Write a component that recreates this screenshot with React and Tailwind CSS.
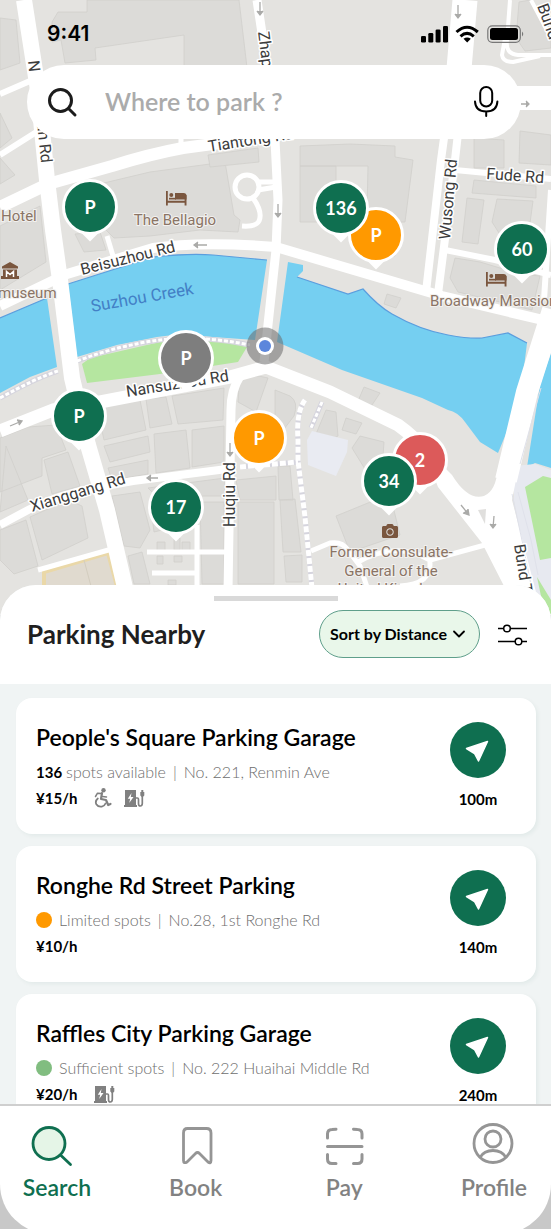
import React from 'react';
import { FaCamera } from 'react-icons/fa';
import { ChevronDown } from 'lucide-react';

const pins = [
  { id: 'bellagio', x: 90, y: 207, label: 'P', color: 'bg-[#0f6f50]' },
  { id: 'tiantong-street', x: 376, y: 235, label: 'P', color: 'bg-[#ff9900]' },
  { id: 'tiantong', x: 341, y: 208, label: '136', color: 'bg-[#0f6f50]' },
  { id: 'broadway', x: 522, y: 249, label: '60', color: 'bg-[#0f6f50]' },
  { id: 'riverside', x: 186, y: 358, label: 'P', color: 'bg-[#7e7e7e]' },
  { id: 'nansuzhou', x: 79, y: 416, label: 'P', color: 'bg-[#0f6f50]' },
  { id: 'huqiu', x: 259, y: 438, label: 'P', color: 'bg-[#ff9900]' },
  { id: 'xianggang', x: 176, y: 507, label: '17', color: 'bg-[#0f6f50]' },
  { id: 'consulate-east', x: 420, y: 460, label: '2', color: 'bg-[#dc5a5a]' },
  { id: 'consulate', x: 389, y: 481, label: '34', color: 'bg-[#0f6f50]' },
];

const WheelchairIcon = () => (
  <svg viewBox="0 0 18 20" className="w-[18px] h-5" fill="none" stroke="currentColor" strokeWidth="1.800" strokeLinecap="round" strokeLinejoin="round" aria-label="Wheelchair access">
    <circle cx="9.500" cy="2.300" r="2.200" fill="currentColor" stroke="none" />
    <path d="M8 5L7 11L12 12L14.200 17L16.500 16" strokeWidth="2.200" />
    <path d="M8 5.500L3.500 5.200L1.500 8.500M8.500 8.500L12.500 9" strokeWidth="1.500" />
    <path d="M3.800 10.500Q0.800 13 2.300 16.200Q4.200 19.200 7.800 18.600Q10.500 18 11.500 15.500" />
  </svg>
);

const ChargerIcon = () => (
  <svg viewBox="0 0 21 18" className="w-[21px] h-[18px]" fill="none" stroke="currentColor" aria-label="EV charging">
    <path d="M1 1H12V16H13V18H0V16H1Z" fill="currentColor" stroke="none" />
    <path d="M7.500 4L3.800 9.800H6.200L5.200 14L9.500 8H6.800Z" fill="#fff" stroke="none" />
    <path d="M12 9H13.500Q14.500 9 14.500 11V14.500Q14.500 17 16.300 17T18.300 14.500V7" strokeWidth="1.700" />
    <path d="M17.300 1H19.300V3H20.300V6.500L18.300 8.500L16.300 6.500V3H17.300Z" fill="currentColor" stroke="none" />
  </svg>
);

const places = [
  {
    name: "People's Square Parking Garage",
    spots: '136',
    status: 'spots available',
    address: 'No. 221, Renmin Ave',
    price: '¥15/h',
    distance: '100m',
    features: [WheelchairIcon, ChargerIcon],
  },
  {
    name: 'Ronghe Rd Street Parking',
    dot: 'bg-[#ff9900]',
    status: 'Limited spots',
    address: 'No.28, 1st Ronghe Rd',
    price: '¥10/h',
    distance: '140m',
    features: [],
  },
  {
    name: 'Raffles City Parking Garage',
    dot: 'bg-[#81bd80]',
    status: 'Sufficient spots',
    address: 'No. 222 Huaihai Middle Rd',
    price: '¥20/h',
    distance: '240m',
    features: [ChargerIcon],
  },
];

const SearchTabIcon = () => (
  <svg viewBox="0 0 56 44" className="w-14 h-11" fill="none" stroke="currentColor" strokeWidth="2.800" strokeLinecap="round">
    <circle cx="20" cy="20.500" r="16" fill="#e5f5e7" />
    <path d="M32 32.500L41.500 41.500" />
  </svg>
);

const BookTabIcon = () => (
  <svg viewBox="0 0 56 44" className="w-14 h-11" fill="none" stroke="#959595" strokeWidth="2.800" strokeLinejoin="round">
    <path d="M19.500 5.500H38.500Q43 5.500 43 10V37.500Q43 41 40 39L31.500 30.500Q29.500 28.500 27.500 30.500L19 39Q15.500 41 15.500 37.500V10Q15.500 5.500 19.500 5.500Z" />
  </svg>
);

const PayTabIcon = () => (
  <svg viewBox="0 0 56 44" className="w-14 h-11" fill="none" stroke="#959595" strokeWidth="3" strokeLinecap="round">
    <path d="M11.500 15V11Q11.500 6.500 16 6.500L20 6.200M37.500 6.200L41.500 6.500Q46 6.500 46 11V15M46 31.500V36Q46 40.500 41.500 40.500H37.500M20 40.500H16Q11.500 40.500 11.500 36V31.500M11.500 23.500H46" />
  </svg>
);

const ProfileTabIcon = () => (
  <svg viewBox="0 0 56 44" className="w-14 h-11" fill="none" stroke="#959595" strokeWidth="2.800">
    <circle cx="27" cy="20.500" r="19" />
    <circle cx="27" cy="16" r="8" />
    <path d="M14 34.500Q18 27.500 27 27.500T40 34.500" />
  </svg>
);

const tabs = [
  { label: 'Search', icon: SearchTabIcon, active: true },
  { label: 'Book', icon: BookTabIcon },
  { label: 'Pay', icon: PayTabIcon },
  { label: 'Profile', icon: ProfileTabIcon },
];

const HotelMark = ({ x, y }) => (
  <svg x={x} y={y} width="21" height="15" viewBox="0 0 21 15" fill="#7a563e">
    <path d="M0 0H1.800V9.800H18.600V4H20.500V14.500H18.600V11.800H1.800V14.500H0Z" />
    <path d="M9 2H17.500Q20.500 2 20.500 5V8.500H9Z" />
    <rect x="3" y="6.800" width="7" height="1.700" />
    <circle cx="5.300" cy="4" r="2" />
  </svg>
);

const MuseumMark = () => (
  <svg x="1" y="262" width="18" height="17" viewBox="0 0 18 17" fill="#7a563e">
    <path d="M9 0L17 4.500V6.500H1V4.500ZM2 7.500H16V14H18V17H0V14H2Z" />
    <path d="M5.500 15V9.500L9 12.500L12.500 9.500V15" fill="none" stroke="#fff" strokeWidth="1.500" />
  </svg>
);

const MapDrawing = () => (
  <svg viewBox="0 0 551 615" className="absolute inset-0 w-full h-full" aria-hidden="true">
    <rect width="551" height="615" fill="#e4e3e0" />

    {/* Buildings */}
    <g fill="#dcdbd8" stroke="#d1cfcc" strokeWidth="0.8">
      <path d="M0 18L16 20L20 63L0 70Z" />
      <path d="M87 0H239L248 76L184 66V35L95 48L96 60L65 63L61 40L52 42V22L58 12H87Z" />
      <path d="M0 113L12 138L0 148ZM0 158L15 175L0 184ZM0 226L40 206L46 262L0 290Z" />
      <path d="M68 192L108 182L150 172L225 162L234 215L240 220L238 232L200 230L150 236L114 238Z" />
      <path d="M75 234L100 232L106 250L84 252ZM208 155L258 148L259 162L210 167Z" />
      <path d="M300 146L350 144L395 146V157L413 160L405 222H395V256H366L368 166L300 166ZM300 166H336V222H300Z" />
      <path d="M474 138L504 140V168H474ZM520 131L551 135V165L519 163ZM474 180L536 186V198L472 193ZM467 198L484 200L478 244L462 242ZM497 199L533 201L528 238L506 244L492 222Z" />
      <path d="M519 2L530 0L551 30V48L525 51L516 38ZM455 258L480 262L520 274L540 276L532 310L500 302L458 292L450 278Z" />
      <path d="M387 294L401 298L396 308L384 304ZM364 387L380 393L370 408L358 401ZM275 390L290 396Q299 402 294 416L284 429H275Z" />
      <path d="M326 410L336 412L338 436L330 440L316 434ZM346 418L362 423L356 434L342 430ZM360 436L384 442L382 470L368 474L352 448Z" />
      <path d="M336 516L390 494L400 535L350 552ZM278 466H290L293 500H279ZM280 500L295 499L301 552H283ZM284 556L302 555V582H286Z" />
      <path d="M0 438L28 427L56 425L66 450L42 458L42 476L0 492ZM6 446L28 500L0 512ZM30 517L68 500L82 506L88 538L42 560ZM44 460L68 452L80 486L52 494ZM0 530L26 520L38 566L14 574L0 560Z" />
      <path d="M97 408L140 400L146 430L104 440ZM146 399L166 397L172 424L150 428ZM172 396L224 388L223 420L178 424ZM104 446L148 436L150 452L110 462ZM154 434L186 430L190 468L156 473ZM192 430L224 426V462L192 467ZM108 468L148 460V474L112 480Z" />
      <path d="M112 496L140 492L150 530L140 548L124 546ZM148 488L225 478V496H156ZM150 500H168L170 528L154 532ZM200 502H224V584H202ZM128 556L142 552L150 584H134ZM236 480L276 476V500H240ZM238 502H274V584H238ZM240 372L268 378L256 412L238 402Z" />
      <path d="M157 542h8v9h-8zM174 538h6v12h-6zM182 542h8v9h-8zM157 556h6v8h-6zM174 556h8v6h-8zM168 580h8v5h-8z" />
    </g>
    <path d="M44 572L108 553L118 590H44Z" fill="#e0dacf" stroke="#ead8a8" strokeWidth="4" />
    <path d="M84 560L92 590" stroke="#d3cdbf" />

    {/* Creek, lawns and plazas */}
    <g fill="#75cff1">
      <path d="M0 318L47 298L57 367L30 377L0 393Z" />
      <path d="M68 284L153 257Q190 253 213 255L267 260L255 340L213 337Q180 333 157 337L117 345L77 357Z" />
      <path d="M288 262L303 265V271L297 277L348 294L363 289Q378 306 392 314Q420 330 448 335Q470 339 482 338L508 333L527 343L520 400L498 453L480 442L465 422Q458 412 448 410L422 398L342 370L277 342Z" />
      <path d="M551 353L540 385L527 467L535 463L551 468Z" />
    </g>
    <g fill="none" stroke="#5b9ede" strokeWidth="1.2">
      <path d="M0 318L47 298M68 284L153 257Q190 253 213 255L267 260" />
      <path d="M297 277L348 294L363 289Q378 306 392 314Q420 330 448 335Q470 339 482 338L508 333L527 343" />
    </g>
    <path d="M514 466L535 464L551 470V615H536L514 500Z" fill="#e7e9f0" />
    <path d="M312 431L348 440L347 452L336 476L308 465L307 440Z" fill="#e9ebf2" />
    <g fill="#b5e6a0">
      <path d="M82 364L90 358L160 342L213 339L247 347L238 362L160 374L87 383Z" />
      <path d="M525 487L543 476L551 478V558L540 560ZM537 577L551 600V615H545Z" />
    </g>

    {/* Footways */}
    <g fill="none" stroke="#d6d5de" strokeWidth="5">
      <path d="M0 398Q36 378 58 371M77 361Q120 345 160 340T250 345M305 400Q296 412 298 440V461L305 517L312 588M240 467L298 462M322 402L311 428" />
    </g>
    <g fill="none" stroke="#fff" strokeWidth="5" strokeDasharray="6 2">
      <path d="M305 400Q296 412 298 440V461L305 517L312 588M240 467L298 462" />
      <path d="M0 398Q36 378 58 371M77 361Q120 345 160 340T250 345M322 402L311 428" strokeWidth="3" strokeDasharray="4 2" />
    </g>

    {/* Streets */}
    <g fill="none" stroke="#fff" strokeLinejoin="round">
      <path d="M24 0L38 90L47 180L53 230L60 280L72 378L88 445L107 510L126 592" strokeWidth="16" />
      <path d="M0 207L48 184L112 166Q150 154 183 148L280 135" strokeWidth="12" />
      <path d="M0 94L30 81M0 155L38 131" strokeWidth="6" />
      <path d="M181 139V148M107 236L113 256" strokeWidth="5" />
      <path d="M0 306L50 282L67 274L153 248Q200 241 276 247L330 263L442 296L551 322" strokeWidth="10" />
      <path d="M257 0L266 60L275 140L278 200L276 250L264 362" strokeWidth="9" />
      <path d="M0 431L53 410L100 402L230 377L266 367L330 392L398 425Q415 437 430 455" strokeWidth="13" />
      <path d="M465 0L458 80" strokeWidth="25" />
      <path d="M452 80L441 160L426 292M464 80L455 160L438 294" strokeWidth="8" />
      <path d="M455 170L551 179M445 250L495 260L551 275M551 190L544 300" strokeWidth="6" />
      <path d="M515 98H551" strokeWidth="24" />
      <path d="M510 0L507 40Q505 54 518 55H551M505 38L502 55Q503 62 513 62L540 56M531 0L551 38" strokeWidth="4" />
      <path d="M553 310L527 392L506 480" strokeWidth="22" />
      <path d="M0 525L30 509Q60 494 100 487L133 481L227 469H236" strokeWidth="8" />
      <path d="M240 376Q231 390 231 410L228 590" strokeWidth="9" />
      <path d="M38 570L112 549M147 552H228M152 573H198M197 525V590" strokeWidth="5" />
      <path d="M311 551L330 543Q342 541 348 550L360 566L368 590M356 563Q395 540 430 560L485 545M430 560Q432 585 400 586" strokeWidth="5" />
      <circle cx="247" cy="187" r="12" strokeWidth="5" />
      <path d="M259 182H276M258 190L276 187M253 198Q263 212 259 221Q256 227 242 226" strokeWidth="5" />
    </g>
    <path d="M422 445L452 475Q468 501 484 496Q496 491 498 468L518 470L512 500L536 592L551 615H520L505 588L482 543L438 487Z" fill="#fff" />
    <path d="M478 510L486 509L485 524Z" fill="#e0dfdd" />
    <g fill="none" stroke="#dfe1ea" strokeWidth="1">
      <path d="M541 388L520 464M512 494L523 545L532 590M518 492L531 540L538 575" />
    </g>

    {/* One-way arrows */}
    <g fill="#aaaaa8" stroke="#aaaaa8" strokeWidth="1.3">
      <path d="M260 2V15M257 11L260 15L263 11M458 5V18M455 14L458 18L461 14M278 204V217M275 213L278 217L281 213" />
      <path d="M207 245H194M198 242L194 245L198 248M158 478H147M151 475L147 478L151 481M10 426L22 421M17 420L22 421L19 425M230 443V456M227 452L230 456L233 452" />
      <path d="M461 505L469 515M468 509L469 515L463 513M494 516L493 528M490 524L493 528L496 524M521 104H529M526 101L529 104L526 107" />
    </g>

    {/* Labels */}
    <g fill="#3c3c3c" stroke="#fff" strokeWidth="3" paintOrder="stroke" fontFamily="Roboto, sans-serif" fontSize="16" strokeLinejoin="round">
      <text transform="translate(28 61) rotate(84)">N</text>
      <text transform="translate(37 123) rotate(84)">an Rd</text>
      <text transform="translate(258 32) rotate(83)">Zhapu Rd</text>
      <text transform="translate(209 152) rotate(-9)">Tiantong Rd</text>
      <text transform="translate(82 275) rotate(-14)">Beisuzhou Rd</text>
      <text transform="translate(127 397) rotate(-9)">Nansuzhou Rd</text>
      <text transform="translate(32 512) rotate(-17)">Xianggang Rd</text>
      <text transform="translate(235 527) rotate(-90)">Huqiu Rd</text>
      <text transform="translate(450 240) rotate(-85)">Wusong Rd</text>
      <text transform="translate(486 179) rotate(4)">Fude Rd</text>
      <text transform="translate(537 6) rotate(70)">Bund</text>
      <text transform="translate(514 545) rotate(81)">Bund T</text>
    </g>
    <text transform="translate(92 312) rotate(-10)" fill="#4380c6" fontFamily="Roboto, sans-serif" fontSize="17">Suzhou Creek</text>
    <g fill="#8a7465" stroke="#f2f1ef" strokeWidth="2" paintOrder="stroke" fontFamily="Roboto, sans-serif" fontSize="15">
      <text x="1" y="221">Hotel</text>
      <text x="175" y="225" textAnchor="middle">The Bellagio</text>
      <text x="-2" y="298">museum</text>
      <text x="430" y="306">Broadway Mansions</text>
      <text x="391" y="557" textAnchor="middle">Former Consulate-</text>
      <text x="391" y="576" textAnchor="middle">General of the</text>
      <text x="391" y="594" textAnchor="middle">United Kingdom</text>
    </g>
    <HotelMark x={166} y={191} />
    <HotelMark x={486} y={272} />
    <MuseumMark />
    <FaCamera x="382" y="523" width="19" height="17" color="#7a563e" />

    {/* Current position */}
    <circle cx="265" cy="346" r="18.500" fill="#6b6b6b" fillOpacity="0.55" />
    <circle cx="265" cy="346" r="9" fill="#fff" />
    <circle cx="265" cy="346" r="6" fill="#5b86dc" />
  </svg>
);

const MapPin = ({ pin }) => (
  <button
    type="button"
    aria-label={`Parking ${pin.label}`}
    className="absolute w-14 h-14 -translate-x-1/2 -translate-y-1/2"
    style={{ left: `${(pin.x / 551) * 100}%`, top: `${(pin.y / 615) * 100}%` }}
  >
    <span className="absolute left-1/2 -bottom-1 w-3 h-3 -translate-x-1/2 rotate-45 bg-white" />
    <span className={`relative flex items-center justify-center w-full h-full rounded-full border-3 border-white text-lg font-bold text-white ${pin.color}`}>
      {pin.label}
    </span>
  </button>
);

const StatusBar = () => (
  <div className="flex items-center justify-between pl-[47px] pr-[27px] pt-[22px]">
    <span className="font-[Inter] text-[21px] leading-6 font-semibold text-black">9:41</span>
    <svg viewBox="0 0 103 20" className="w-[103px] h-5" aria-hidden="true">
      <g fill="#000">
        <rect x="0" y="12" width="5" height="6.500" rx="1.300" />
        <rect x="7.300" y="9" width="5" height="9.500" rx="1.300" />
        <rect x="14.600" y="5.500" width="5" height="13" rx="1.300" />
        <rect x="22" y="2" width="5" height="16.500" rx="1.300" />
        <rect x="69" y="4" width="28" height="12" rx="2.500" />
      </g>
      <g fill="none" stroke="#000" strokeWidth="3">
        <path d="M35.500 8Q46 -1.500 56.800 8" />
        <path d="M39.500 12.300Q46 6.500 52.800 12.300" />
      </g>
      <path d="M42.500 14.800Q46.200 12 49.800 14.800L46.200 18.600Z" />
      <rect x="66.800" y="1.800" width="32.500" height="16.500" rx="4.500" fill="none" stroke="#777" strokeWidth="1.200" />
      <path d="M101 7.500Q103.500 10 101 12.500Z" fill="#777" />
    </svg>
  </div>
);

const SearchBar = () => (
  <form className="flex items-center mt-[19px] ml-[27px] mr-[30px] h-[74px] pl-5 pr-5 rounded-full bg-white">
    <svg viewBox="0 0 32 32" className="w-8 h-8 shrink-0" fill="none" stroke="#1c1c1c" strokeWidth="3" strokeLinecap="round" aria-hidden="true">
      <circle cx="13.500" cy="14.500" r="11" />
      <path d="M21.500 22.500L28 29" />
    </svg>
    <input
      type="text"
      aria-label="Where to park"
      placeholder="Where to park ?"
      className="flex-1 min-w-0 ml-[26px] text-[25px] font-semibold text-black placeholder-[#ababab] bg-transparent outline-none"
    />
    <button type="button" aria-label="Voice search">
      <svg viewBox="0 0 28 32" className="w-7 h-8" fill="none" stroke="#000" strokeWidth="2" strokeLinecap="round">
        <rect x="7.200" y="1" width="12" height="19.500" rx="6" />
        <path d="M2 15.500Q2.500 25.500 13.200 25.500T24.400 15.500M13.200 25.500V30" />
      </svg>
    </button>
  </form>
);

const ParkingCard = ({ place }) => (
  <li className="flex justify-between h-[136px] shrink-0 pl-5 pr-[30px] rounded-2xl bg-white shadow-[2px_2px_4px_rgba(20,80,70,0.06)]">
    <div className="min-w-0 pt-[25px]">
      <h2 className="text-[23px] leading-7 font-semibold text-black truncate">{place.name}</h2>
      <p className="flex items-center mt-2 text-base leading-[26px] font-light text-[#6e6e6e]">
        {place.dot && <span className={`w-4 h-4 mr-[7px] rounded-full ${place.dot}`} />}
        {place.spots && <strong className="mr-1 text-[15px] font-bold text-black">{place.spots}</strong>}
        <span>{place.status}</span>
        <span className="mx-[7px]">|</span>
        <span>{place.address}</span>
      </p>
      <div className="flex items-center gap-3 text-[#808080]">
        <span className="mr-1 text-[15px] leading-[26px] font-bold text-black">{place.price}</span>
        {place.features.map((Icon, index) => (
          <Icon key={index} />
        ))}
      </div>
    </div>
    <div className="flex flex-col items-center w-14 shrink-0 pt-6">
      <button
        type="button"
        aria-label={`Directions to ${place.name}`}
        className="flex items-center justify-center w-14 h-14 rounded-full bg-[#0f6f50]"
      >
        <svg viewBox="0 0 56 56" className="w-14 h-14" fill="#fff" stroke="#fff" strokeWidth="1.500" strokeLinejoin="round">
          <path d="M37.500 19.500L28.500 39L24.500 31.500L16.500 26.500Z" />
        </svg>
      </button>
      <span className="mt-2 text-[15px] leading-[26px] font-bold text-black">{place.distance}</span>
    </div>
  </li>
);

export default function App() {
  return (
    <div className="flex flex-col h-dvh overflow-hidden bg-[#c8c8c8] font-[Lato,sans-serif]">
      {/* Map */}
      <section className="relative w-full aspect-[551/615] shrink-0">
        <MapDrawing />
        {pins.map((pin) => (
          <MapPin key={pin.id} pin={pin} />
        ))}
        <div className="relative">
          <StatusBar />
          <SearchBar />
        </div>
      </section>

      {/* Nearby list */}
      <main className="relative flex flex-col flex-1 min-h-0 -mt-[30px] rounded-t-[36px] overflow-hidden bg-[#f0f4f4]">
        <header className="h-[99px] shrink-0 bg-white">
          <div className="w-[124px] h-[5px] mt-[11px] mx-auto bg-[#d9d9d9]" />
          <div className="flex items-center mt-[9px] pl-[27px] pr-[23px]">
            <h1 className="flex-1 text-[26px] leading-8 font-bold text-[#1f1f1f]">Parking Nearby</h1>
            <button
              type="button"
              className="flex items-center justify-center gap-0.5 w-[161px] h-12 rounded-full border border-[#5f9f8b] bg-[#e9f7ea] text-base font-bold text-black"
            >
              Sort by Distance
              <ChevronDown className="w-5 h-5" strokeWidth={2.2} />
            </button>
            <button type="button" aria-label="Filters" className="ml-[18px]">
              <svg viewBox="0 0 30 24" className="w-[30px] h-6" fill="none" stroke="#000" strokeWidth="1.500">
                <path d="M0 6.500H5.500M12.500 6.500H29M0 19.500H17M24 19.500H29" />
                <circle cx="9" cy="6.500" r="3.300" />
                <circle cx="20.500" cy="19.500" r="3.300" />
              </svg>
            </button>
          </div>
        </header>
        <ul className="flex flex-col flex-1 min-h-0 gap-3 pt-[14px] pl-4 pr-[15px] overflow-y-auto [scrollbar-width:none]">
          {places.map((place) => (
            <ParkingCard key={place.name} place={place} />
          ))}
        </ul>
      </main>

      {/* Tab bar */}
      <nav className="relative grid grid-cols-[139fr_149fr_150fr_auto] h-[130px] shrink-0 -mb-[5px] px-[22px] pt-[17px] rounded-b-[50px] border-t-2 border-[#cfcfcf] bg-white">
        {tabs.map((tab) => {
          const Icon = tab.icon;
          return (
            <a
              key={tab.label}
              href={`#${tab.label.toLowerCase()}`}
              className={`flex flex-col items-center gap-1.5 w-[70px] text-[23px] leading-7 font-semibold ${
                tab.active ? 'text-[#0f6f50]' : 'text-[#828282]'
              }`}
            >
              <Icon />
              {tab.label}
            </a>
          );
        })}
      </nav>
    </div>
  );
}
